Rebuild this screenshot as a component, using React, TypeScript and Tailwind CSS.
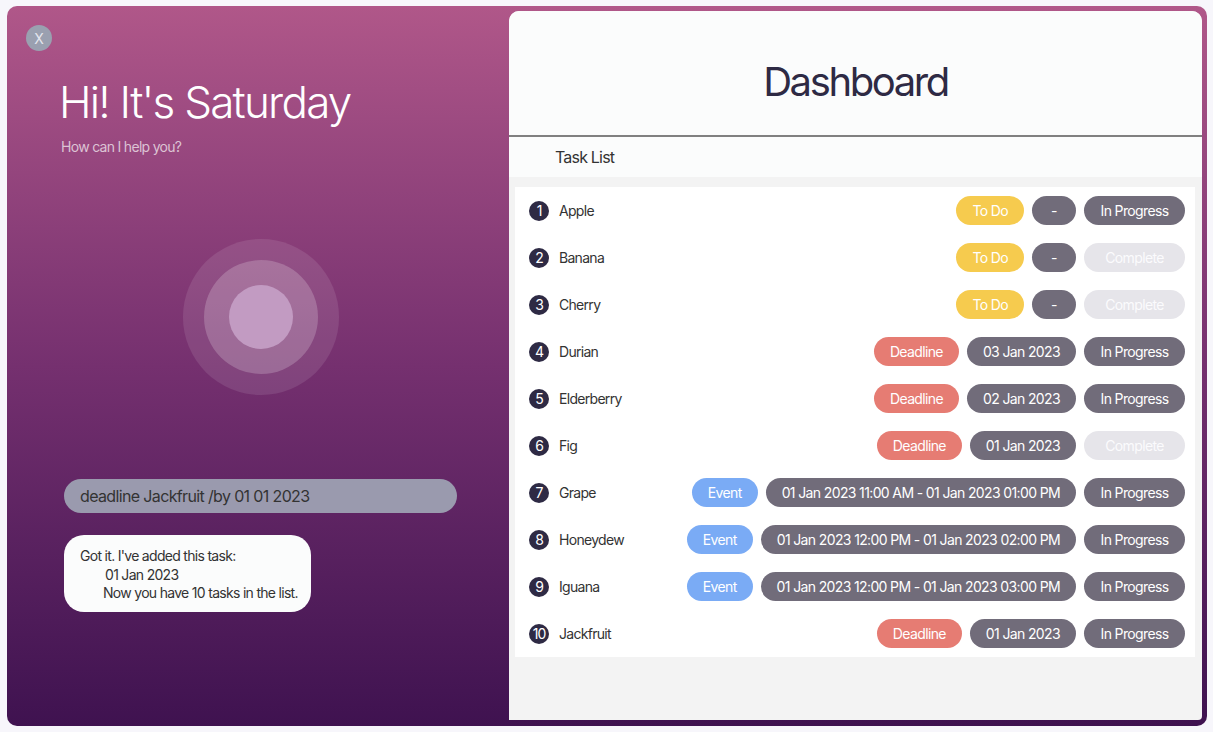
import React from 'react';

type Task = {
  name: string;
  kind: 'todo' | 'deadline' | 'event';
  when: string;
  done: boolean;
};

const tasks: Task[] = [
  { name: 'Apple', kind: 'todo', when: '-', done: false },
  { name: 'Banana', kind: 'todo', when: '-', done: true },
  { name: 'Cherry', kind: 'todo', when: '-', done: true },
  { name: 'Durian', kind: 'deadline', when: '03 Jan 2023', done: false },
  { name: 'Elderberry', kind: 'deadline', when: '02 Jan 2023', done: false },
  { name: 'Fig', kind: 'deadline', when: '01 Jan 2023', done: true },
  { name: 'Grape', kind: 'event', when: '01 Jan 2023 11:00 AM - 01 Jan 2023 01:00 PM', done: false },
  { name: 'Honeydew', kind: 'event', when: '01 Jan 2023 12:00 PM - 01 Jan 2023 02:00 PM', done: false },
  { name: 'Iguana', kind: 'event', when: '01 Jan 2023 12:00 PM - 01 Jan 2023 03:00 PM', done: false },
  { name: 'Jackfruit', kind: 'deadline', when: '01 Jan 2023', done: false },
];

const kindPill = {
  todo: { label: 'To Do', cls: 'bg-[#f6cb4e]' },
  deadline: { label: 'Deadline', cls: 'bg-[#e67c73]' },
  event: { label: 'Event', cls: 'bg-[#7aabf5]' },
};

const TaskRow = ({ task, index }: { task: Task; index: number }) => {
  const kind = kindPill[task.kind];
  return (
    <div className="flex items-center h-[47px] pl-[14px] pr-[10px]">
      <div className="w-5 h-5 rounded-full bg-[#2e2a44] text-white text-[14px] flex items-center justify-center shrink-0 tracking-[-0.08em]">
        {index + 1}
      </div>
      <span className="ml-[10px] text-[14px] text-[#333333] tracking-[-0.05em]">{task.name}</span>
      <div className="ml-auto flex items-center gap-2 text-[14px] text-white tracking-[-0.045em]">
        <span className={`h-[29px] px-4 rounded-full flex items-center ${kind.cls}`}>{kind.label}</span>
        <span className="h-[29px] min-w-[44px] px-4 rounded-full flex items-center justify-center bg-[#716c7a]">{task.when}</span>
        {task.done ? (
          <span className="h-[29px] w-[101px] rounded-full flex items-center justify-center bg-[#e6e5ea] text-[#fbfbfd]">
            Complete
          </span>
        ) : (
          <span className="h-[29px] w-[101px] rounded-full flex items-center justify-center bg-[#716c7a]">
            In Progress
          </span>
        )}
      </div>
    </div>
  );
};

export default function App() {
  return (
    <div className="w-full h-[732px] bg-[#f7f6fb] pt-[6px] pb-[6px] pl-[7px] pr-[6px]" style={{ fontFamily: 'Inter, "Noto Sans", sans-serif' }}>
      <div className="h-full flex rounded-[10px] bg-gradient-to-b from-[#b05789] via-[#75306f] to-[#3f1250]">
        {/* Left: assistant */}
        <div className="w-[502px] shrink-0 flex flex-col">
          <div className="pt-[19px] pl-[19px]">
            <div className="w-[26px] h-[26px] rounded-full bg-[#9aa0b0] text-[#e4e6ee] text-[14px] flex items-center justify-center">
              X
            </div>
          </div>
          <h1 className="mt-[23px] ml-[52px] text-[44px] leading-[56px] font-light text-white tracking-[-0.04em]">Hi! It's Saturday</h1>
          <p className="mt-[6px] ml-[54px] text-[14px] text-[#dcc3d4] tracking-[-0.05em]">How can I help you?</p>
          <div className="mt-[82px] flex justify-center pl-[6px]">
            <div className="w-[156px] h-[156px] rounded-full bg-white/10 flex items-center justify-center">
              <div className="w-[114px] h-[114px] rounded-full bg-white/20 flex items-center justify-center">
                <div className="w-[64px] h-[64px] rounded-full bg-[#c29bc2]" />
              </div>
            </div>
          </div>
          <div className="mt-[84px] ml-[57px] w-[393px] h-[34px] rounded-full bg-[#9a9aae] flex items-center pl-4 text-[16px] text-[#333333] tracking-[-0.04em]">
            deadline Jackfruit /by 01 01 2023
          </div>
          <div className="mt-[22px] ml-[57px] w-[247px] h-[77px] rounded-[20px] bg-[#fbfcfc] pl-4 pt-[12px] text-[14px] leading-[18.5px] text-[#333333] tracking-[-0.05em]">
            <div>Got it. I've added this task:</div>
            <div className="pl-[25px]">01 Jan 2023</div>
            <div className="pl-[23px]">Now you have 10 tasks in the list.</div>
          </div>
        </div>

        {/* Right: dashboard */}
        <div className="flex-1 mt-[5px] mr-[5px] mb-[6px] rounded-t-[10px] rounded-br-[4px] bg-[#f3f3f3] flex flex-col overflow-hidden">
          <div className="h-[126px] shrink-0 bg-[#fbfcfc] flex items-center justify-center border-b-2 border-[#808080]">
            <h2 className="text-[40px] text-[#2e2a44] pt-[18px] tracking-[-0.06em]">Dashboard</h2>
          </div>
          <div className="h-[40px] shrink-0 bg-[#fbfcfc] flex items-center pl-[46px] text-[16px] text-[#333333] tracking-[-0.05em]">
            Task List
          </div>
          <div className="mt-[10px] ml-[6px] mr-[7px] bg-white">
            {tasks.map((task, index) => (
              <TaskRow key={index} task={task} index={index} />
            ))}
          </div>
        </div>
      </div>
    </div>
  );
}
